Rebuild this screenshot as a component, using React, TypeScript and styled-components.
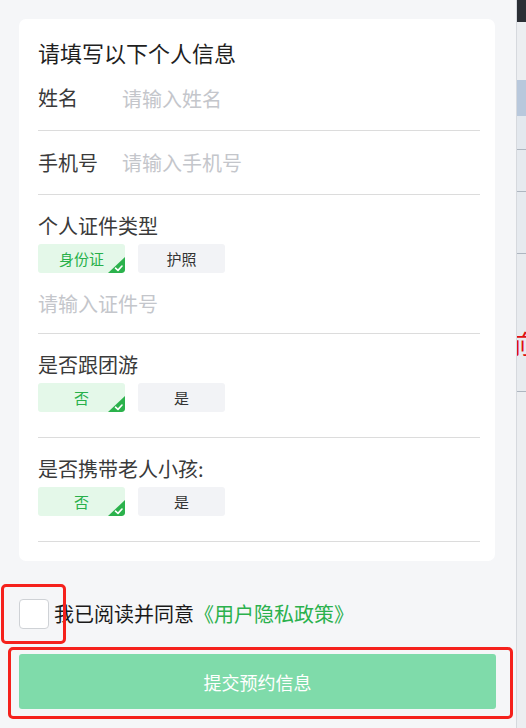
import React, { useState } from "react";
import styled, { createGlobalStyle } from "styled-components";

const Global = createGlobalStyle`
  html, body { margin: 0; padding: 0; background: #f5f6f8; }
  body { font-family: "Noto Sans CJK SC", "Noto Sans", sans-serif; }
  * { box-sizing: border-box; }
`;

const Page = styled.div`
  display: flex;
  width: 526px;
  height: 728px;
  overflow: hidden;
`;

const Main = styled.div`
  position: relative;
  width: 517px;
  flex: none;
  background: #f5f6f8;
  padding: 19px 21px 0 19px;
  border-right: 1px solid #d6d9de;
`;

const Card = styled.div`
  background: #fff;
  border-radius: 7px;
  padding: 20px 15px 19px 19px;
`;

const Title = styled.div`
  font-size: 22px;
  line-height: 27px;
  color: #1f1f1f;
`;

const InlineRow = styled.div<{ $h: number }>`
  display: flex;
  align-items: center;
  height: ${(p) => p.$h}px;
  border-bottom: 1px solid #dcdcdc;
  font-size: 20px;
`;

const Label = styled.div`
  width: 84px;
  color: #3a3a3a;
  font-size: 20px;
  line-height: 22px;
`;

const Placeholder = styled.div`
  color: #c4c6cb;
  font-size: 20px;
`;

const Section = styled.div<{ $pb: number }>`
  display: flex;
  flex-direction: column;
  padding-top: 20px;
  padding-bottom: ${(p) => p.$pb}px;
  border-bottom: 1px solid #dcdcdc;
`;

const SectionLabel = styled.div`
  color: #3a3a3a;
  font-size: 20px;
  line-height: 22px;
`;

const Options = styled.div`
  display: flex;
  gap: 13px;
  margin-top: 7px;
`;

const Option = styled.div<{ $on: boolean }>`
  position: relative;
  width: 87px;
  height: 29px;
  border-radius: 3px;
  display: flex;
  align-items: center;
  justify-content: center;
  font-size: 15px;
  background: ${(p) => (p.$on ? "#e4f8e9" : "#f2f3f6")};
  color: ${(p) => (p.$on ? "#28b04b" : "#333")};
  overflow: hidden;
`;

const Corner = styled.svg`
  position: absolute;
  right: 0;
  bottom: 0;
`;

const InputRow = styled.div`
  height: 60px;
  display: flex;
  align-items: center;
`;

const Agree = styled.div`
  display: flex;
  align-items: center;
  margin-top: 38px;
  gap: 5px;
`;

const Box = styled.div`
  width: 30px;
  height: 30px;
  border: 1px solid #cfd2d6;
  border-radius: 4px;
  background: #fff;
`;

const AgreeText = styled.div`
  font-size: 20px;
  color: #1a1a1a;
  line-height: 30px;
`;

const Link = styled.span`
  color: #2bb14d;
`;

const Submit = styled.button`
  margin-top: 25px;
  width: 477px;
  height: 55px;
  border: none;
  border-radius: 3px;
  background: #7fdbaa;
  color: #fff;
  font-family: inherit;
  font-size: 18px;
  display: flex;
  align-items: center;
  justify-content: center;
`;

const Highlight = styled.div<{ $x: number; $y: number; $w: number; $h: number }>`
  position: absolute;
  left: ${(p) => p.$x}px;
  top: ${(p) => p.$y}px;
  width: ${(p) => p.$w}px;
  height: ${(p) => p.$h}px;
  border: 3px solid #f5211c;
  border-radius: 5px;
  pointer-events: none;
`;

const Strip = styled.div`
  flex: 1;
  display: flex;
  flex-direction: column;
  background: #e9ecf0;
`;

const StripBlock = styled.div<{ $h: number; $bg: string; $line?: boolean }>`
  height: ${(p) => p.$h}px;
  flex: none;
  background: ${(p) => p.$bg};
  border-bottom: ${(p) => (p.$line ? "1px solid #aeb6c0" : "none")};
  overflow: hidden;
  font-size: 26px;
  line-height: 30px;
  color: #e01010;
`;

const StripGlyph = styled.div`
  margin-top: 74px;
  margin-left: -11px;
`;

const Check = () => (
  <Corner width="17" height="16" viewBox="0 0 17 16">
    <path d="M17 0 L17 13 Q17 16 14 16 L0 16 Z" fill="#2bb24c" />
    <path d="M7.5 11.2 L10 13.4 L14 9" stroke="#fff" strokeWidth="1.6" fill="none" strokeLinecap="round" strokeLinejoin="round" />
  </Corner>
);

const OptionGroup = ({ items, value }: { items: string[]; value: number }) => (
  <Options>
    {items.map((t, i) => (
      <Option key={t} $on={i === value}>
        {t}
        {i === value && <Check />}
      </Option>
    ))}
  </Options>
);

export default function App() {
  const [idType] = useState(0);
  return (
    <Page>
      <Global />
      <Main>
        <Card>
          <Title>请填写以下个人信息</Title>
          <InlineRow $h={65}>
            <Label>姓名</Label>
            <Placeholder>请输入姓名</Placeholder>
          </InlineRow>
          <InlineRow $h={64}>
            <Label>手机号</Label>
            <Placeholder>请输入手机号</Placeholder>
          </InlineRow>
          <Section $pb={0}>
            <SectionLabel>个人证件类型</SectionLabel>
            <OptionGroup items={["身份证", "护照"]} value={idType} />
            <InputRow>
              <Placeholder>请输入证件号</Placeholder>
            </InputRow>
          </Section>
          <Section $pb={25}>
            <SectionLabel>是否跟团游</SectionLabel>
            <OptionGroup items={["否", "是"]} value={0} />
          </Section>
          <Section $pb={25}>
            <SectionLabel>是否携带老人小孩:</SectionLabel>
            <OptionGroup items={["否", "是"]} value={0} />
          </Section>
        </Card>
        <Agree>
          <Box />
          <AgreeText>
            我已阅读并同意<Link>《用户隐私政策》</Link>
          </AgreeText>
        </Agree>
        <Submit>提交预约信息</Submit>
        <Highlight $x={1} $y={584} $w={65} $h={60} />
        <Highlight $x={8} $y={647} $w={505} $h={72} />
      </Main>
      <Strip>
        <StripBlock $h={22} $bg="#2b2f35" />
        <StripBlock $h={58} $bg="#eceef1" />
        <StripBlock $h={36} $bg="#b8c8dc" />
        <StripBlock $h={34} $bg="#e3e8ee" $line />
        <StripBlock $h={42} $bg="#e6eaef" $line />
        <StripBlock $h={62} $bg="#e6eaef" $line />
        <StripBlock $h={138} $bg="#e8ebef" $line>
          <StripGlyph>前</StripGlyph>
        </StripBlock>
        <StripBlock $h={336} $bg="#eceef1" />
      </Strip>
    </Page>
  );
}
